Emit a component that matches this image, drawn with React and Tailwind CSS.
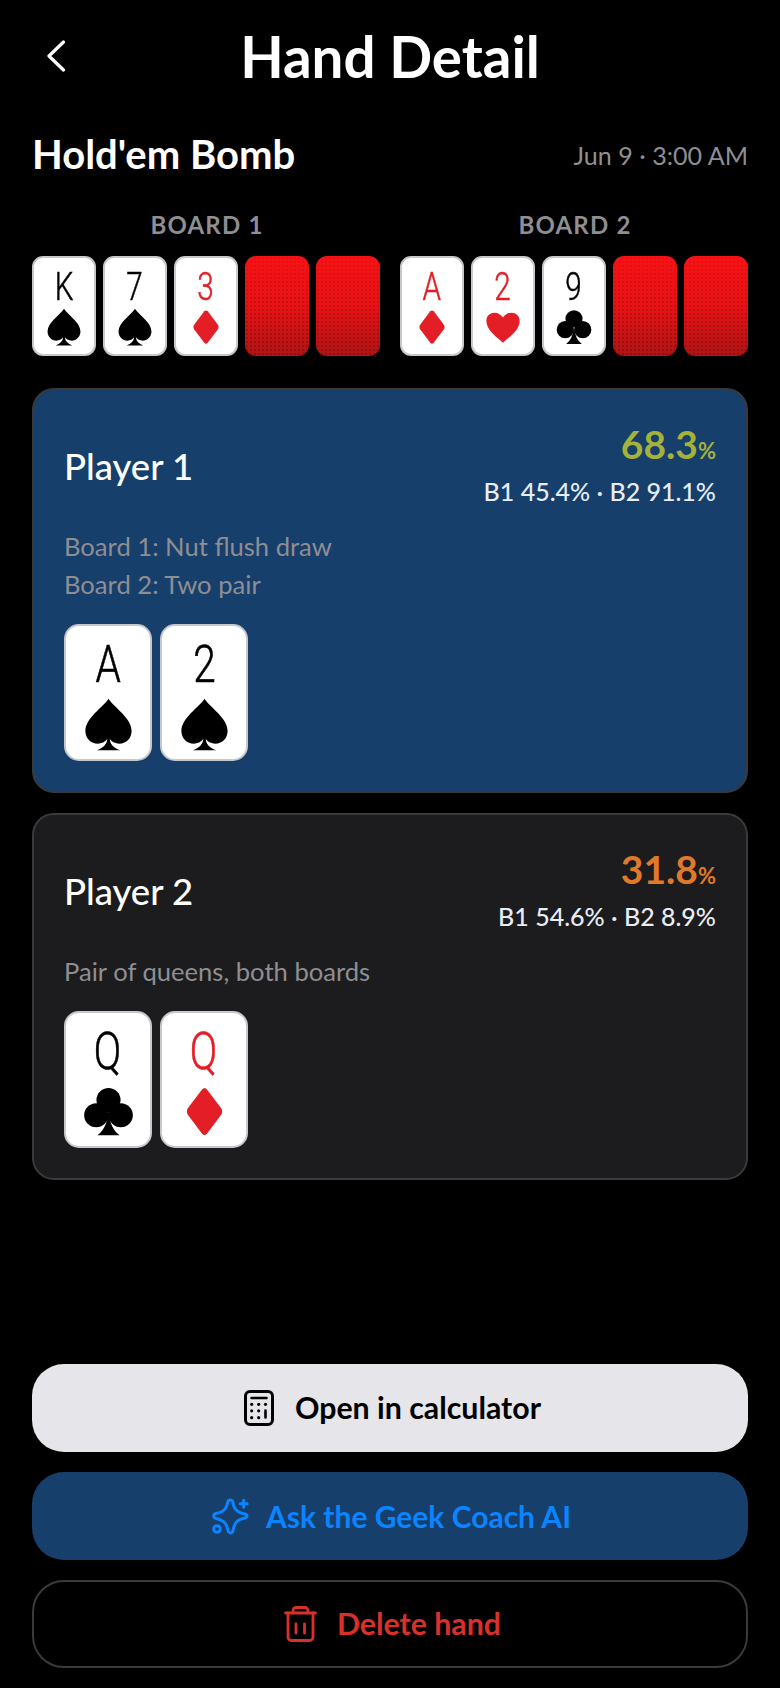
import React from 'react'

const suitPaths = {
    s: <path d="M12 1.5C9.6 5.2 2.6 9.3 2.6 14.6c0 3.1 2.4 5.2 5 5.2 1.5 0 3-.7 3.9-1.9-.2 2-1.3 3.500-4.200 4.600h9.400c-2.900-1.100-4-2.600-4.200-4.600.9 1.200 2.400 1.900 3.900 1.900 2.600 0 5-2.100 5-5.200C21.400 9.300 14.400 5.200 12 1.500z" />,
    c: <>
        <circle cx="12" cy="7.300" r="4.900" />
        <circle cx="7" cy="13.500" r="4.900" />
        <circle cx="17" cy="13.500" r="4.900" />
        <path d="M12 9c-.1 6-1 10-4.500 12.700h9C13 19 12.100 15 12 9z" />
    </>,
    d: <path d="M12 2.500c.4 0 .7.2 1 .5l5.800 7.700c.5.7.5 1.900 0 2.600L13 21c-.6.7-1.400.7-2 0l-5.800-7.700c-.5-.7-.5-1.900 0-2.600L11 3c.3-.3.600-.5 1-.5z" />,
    h: <path d="M12 21C9 18 2.500 14 2.500 8.500 2.500 5.500 4.700 3.800 7.200 3.800c2 0 3.800 1.200 4.800 2.800 1-1.600 2.800-2.800 4.800-2.800 2.500 0 4.700 1.700 4.700 4.700C21.500 14 15 18 12 21z" />,
}

const Suit = ({ suit, className }) => {
    const color = suit === 'd' || suit === 'h' ? 'fill-[#e31e26]' : 'fill-black'
    return <svg viewBox="0 0 24 24" className={`${className} ${color}`}>
        {suitPaths[suit]}
    </svg>
}

const BoardCard = ({ rank, suit }) => {
    const color = suit === 'd' || suit === 'h' ? 'text-[#e31e26]' : 'text-black'
    return <div className="w-16 h-[100px] rounded-[11px] bg-white border-2 border-[#c8c8cc] flex flex-col items-center">
        <span className={`mt-[14px] h-[30px] text-[38px] leading-[30px] font-['Roboto',sans-serif] font-light scale-x-[0.78] [-webkit-text-stroke:0.5px_currentColor] ${color}`}>{rank}</span>
        <Suit suit={suit} className="w-[42px] h-[42px] mt-1" />
    </div>
}

const CardBack = () => {
    return <div className="w-16 h-[100px] rounded-[11px] bg-[linear-gradient(180deg,#f81216_0%,#e81215_50%,#b01416_100%)] relative overflow-hidden">
        <div className="absolute inset-0 bg-[radial-gradient(rgba(80,0,0,0.3)_1px,transparent_1.2px)] bg-[length:4px_4px] [mask-image:linear-gradient(180deg,rgba(0,0,0,0.25),black)]" />
    </div>
}

const Board = ({ title, cards }) => {
    return <div className="flex flex-col items-center">
        <p className="h-6 text-[24px] leading-6 font-bold tracking-[1.2px] text-[#8e8e93] mb-[19px] pl-[2px]">{title}</p>
        <div className="flex gap-[7px]">
            {cards.map((c) => <BoardCard key={c.rank + c.suit} rank={c.rank} suit={c.suit} />)}
            <CardBack />
            <CardBack />
        </div>
    </div>
}

const HoleCard = ({ rank, suit }) => {
    const color = suit === 'd' || suit === 'h' ? 'text-[#e31e26]' : 'text-black'
    return <div className="w-[88px] h-[137px] rounded-[15px] bg-white border-2 border-[#c8c8cc] flex flex-col items-center">
        <span className={`mt-[19px] h-10 text-[52px] leading-10 font-['Roboto',sans-serif] font-light scale-x-[0.78] [-webkit-text-stroke:0.6px_currentColor] ${color}`}>{rank}</span>
        <Suit suit={suit} className="w-[59px] h-[59px] mt-[10px]" />
    </div>
}

const PlayerCard = ({ name, equity, equityColor, detail, lines, cards, bg }) => {
    return <div className={`rounded-[22px] border-2 border-[#3a3a3c] px-[30px] pt-[30px] pb-[30px] ${bg}`}>
        <div className="flex justify-between items-start">
            <p className="text-[36.500px] leading-[44px] font-medium text-white mt-6">{name}</p>
            <div className="flex flex-col items-end">
                <p className={`text-[39px] leading-[44px] font-bold mt-[2px] ${equityColor}`}>
                    {equity}<span className="text-[22px]">%</span>
                </p>
                <p className="text-[25px] leading-[34px] text-[#e8edf5] font-medium mt-[1px]">{detail}</p>
            </div>
        </div>
        <div className="mt-[19px] text-[25.600px] leading-[38px] text-[#8e8e93]">
            {lines.map((l) => <p key={l}>{l}</p>)}
        </div>
        <div className="flex gap-2 mt-[21px]">
            {cards.map((c) => <HoleCard key={c.rank + c.suit} rank={c.rank} suit={c.suit} />)}
        </div>
    </div>
}

const CalculatorIcon = () => {
    return <svg viewBox="0 0 30 36" className="w-[30px] h-9 fill-none stroke-black stroke-[3]" strokeLinecap="round">
        <rect x="1.500" y="1.500" width="27" height="33" rx="4.500" />
        <path d="M7.500 8h15M21.500 20.500v7" strokeWidth="2.600" />
        <g className="fill-black stroke-none">
            <circle cx="7.700" cy="14.300" r="1.600" />
            <circle cx="14.700" cy="14.300" r="1.600" />
            <circle cx="21.500" cy="14.300" r="1.600" />
            <circle cx="7.700" cy="20.800" r="1.600" />
            <circle cx="14.700" cy="20.800" r="1.600" />
            <circle cx="7.700" cy="27.700" r="1.600" />
            <circle cx="14.700" cy="27.700" r="1.600" />
        </g>
    </svg>
}

const SparkleIcon = () => {
    return <svg viewBox="0 0 37 37" className="w-[37px] h-[37px] fill-none stroke-[#0a84ff] stroke-[3]" strokeLinecap="round" strokeLinejoin="round">
        <path d="M15.700 4.200C16.300 1.200 20.300 1.200 20.900 4.200 22 11 24.500 14.200 33 16c2.500.6 2.500 3.400 0 4-7.500 1.500-10.500 4.500-12 12.500-.6 3.200-4.200 3.200-5 0-1.200-6.500-3.500-10-12-12-3-.8-3-4.200 0-5 8-1.800 10.500-4.500 11.700-11.300z" className="fill-[#163f6b]" />
        <path d="M31.700 2.200v7M28.200 5.700h7" />
        <circle cx="5" cy="31" r="3.300" className="fill-[#163f6b]" />
    </svg>
}

const TrashIcon = () => {
    return <svg viewBox="0 0 33 36" className="w-[33px] h-9 fill-none stroke-[#d9302c] stroke-[2.800]" strokeLinecap="round" strokeLinejoin="round">
        <path d="M1.500 7h30M9 7V4.500a3 3 0 0 1 3-3h9a3 3 0 0 1 3 3V7" />
        <path d="M4 7v24a3.500 3.500 0 0 0 3.500 3.500h18a3.500 3.500 0 0 0 3.500-3.500V7" />
        <path d="M12 18v9M20.500 18v9" />
    </svg>
}

const App = () => {
    return <div className="w-[780px] h-[1688px] bg-black flex flex-col font-['Lato',sans-serif] text-white px-8 pb-5">
        <div className="relative h-[115px] flex justify-center shrink-0">
            <svg viewBox="0 0 18 32" className="absolute left-[15px] top-10 w-[18px] h-8 fill-none stroke-white stroke-[3.200]" strokeLinecap="round" strokeLinejoin="round">
                <path d="M16.500 2 2 16l14.500 14" />
            </svg>
            <h1 className="text-[56.500px] leading-[70px] font-bold mt-[21px]">Hand Detail</h1>
        </div>
        <div className="flex justify-between items-center h-[40px] mt-[19px]">
            <p className="text-[40px] leading-[40px] font-bold">Hold'em Bomb</p>
            <p className="text-[25.100px] leading-[40px] text-[#8e8e93] mt-[1px]">Jun 9 · 3:00 AM</p>
        </div>
        <div className="flex justify-between mt-[39px]">
            <Board title="BOARD 1" cards={[{ rank: 'K', suit: 's' }, { rank: '7', suit: 's' }, { rank: '3', suit: 'd' }]} />
            <Board title="BOARD 2" cards={[{ rank: 'A', suit: 'd' }, { rank: '2', suit: 'h' }, { rank: '9', suit: 'c' }]} />
        </div>
        <div className="flex flex-col gap-5 mt-8">
            <PlayerCard
                name="Player 1"
                equity="68.3"
                equityColor="text-[#a4b13a]"
                detail="B1 45.4% · B2 91.1%"
                lines={['Board 1: Nut flush draw', 'Board 2: Two pair']}
                cards={[{ rank: 'A', suit: 's' }, { rank: '2', suit: 's' }]}
                bg="bg-[#163f6b]"
            />
            <PlayerCard
                name="Player 2"
                equity="31.8"
                equityColor="text-[#e07a2a]"
                detail="B1 54.6% · B2 8.9%"
                lines={['Pair of queens, both boards']}
                cards={[{ rank: 'Q', suit: 'c' }, { rank: 'Q', suit: 'd' }]}
                bg="bg-[#1c1c1e]"
            />
        </div>
        <div className="mt-auto flex flex-col gap-5">
            <button className="h-[88px] pl-[5px] rounded-[32px] bg-[#e5e5ea] text-black flex items-center justify-center gap-[21px] text-[30.300px] font-bold">
                <CalculatorIcon />
                Open in calculator
            </button>
            <button className="h-[88px] pl-[3px] rounded-[32px] bg-[#163f6b] text-[#0a84ff] flex items-center justify-center gap-[17px] text-[30px] font-bold">
                <SparkleIcon />
                Ask the Geek Coach AI
            </button>
            <button className="h-[88px] pl-[5px] rounded-[32px] border-2 border-[#3a3a3c] text-[#d9302c] flex items-center justify-center gap-5 text-[30.300px] font-bold">
                <TrashIcon />
                Delete hand
            </button>
        </div>
    </div>
}

export default App
